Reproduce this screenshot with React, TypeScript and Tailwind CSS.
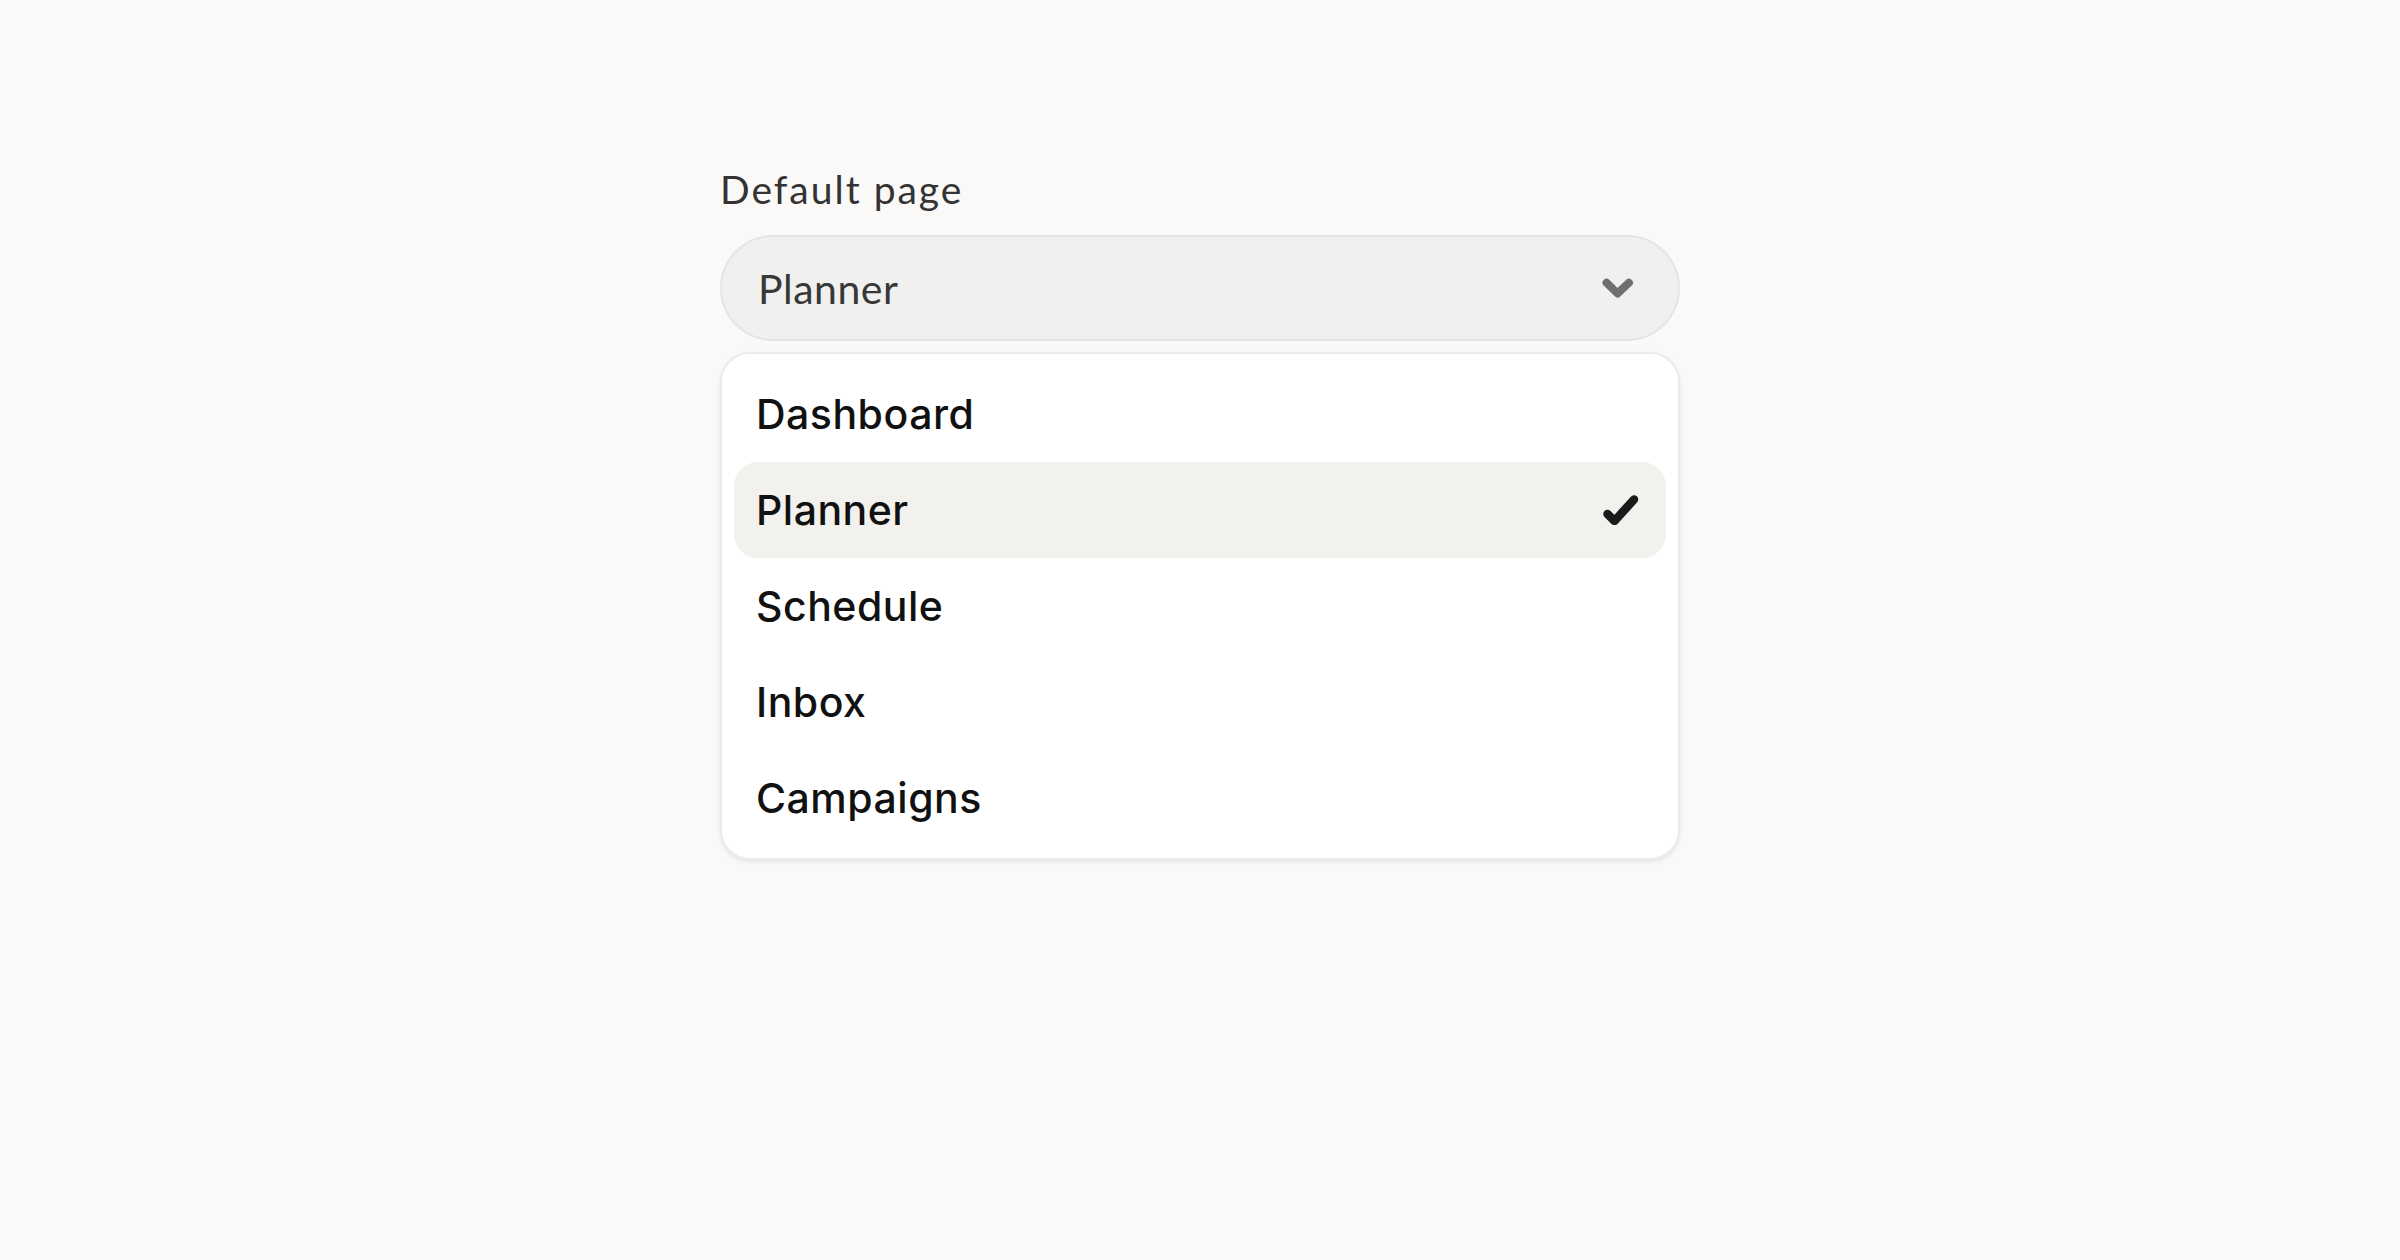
import { useState } from 'react';

const pages = ['Dashboard', 'Planner', 'Schedule', 'Inbox', 'Campaigns'];

function ChevronIcon() {
  return (
    <svg width="32" height="20" viewBox="0 0 32 20" fill="none" className="shrink-0">
      <path
        d="M4.5 4.7 L15.5 15.5 L27 4.7"
        stroke="#6f6f6f"
        strokeWidth="8"
        strokeLinecap="round"
        strokeLinejoin="round"
      />
    </svg>
  );
}

function CheckIcon() {
  return (
    <svg width="36" height="30" viewBox="0 0 36 30" fill="none" className="shrink-0">
      <path
        d="M4.5 19 L11.5 26 L31 4.5"
        stroke="#1a1a1a"
        strokeWidth="8.5"
        strokeLinecap="round"
        strokeLinejoin="round"
      />
    </svg>
  );
}

export default function App() {
  const [selected, setSelected] = useState('Planner');

  return (
    <div className="min-h-screen bg-[#faf9f7] pt-[170px]">
      <div className="mx-auto w-[960px]">
        <div className="font-['Lato',sans-serif] text-[39px] leading-none tracking-[2px] text-[#333333]">
          Default page
        </div>

        <button className="mt-[26px] flex h-[106px] w-full items-center justify-between rounded-full border-2 border-[#e5e5e3] bg-[#f0f0ef] pl-[36px] pr-[44px] text-left">
          <span className="font-['Lato',sans-serif] text-[41px] leading-none tracking-[0.5px] text-[#383838]">
            {selected}
          </span>
          <ChevronIcon />
        </button>

        <div className="mt-[11px] rounded-[30px] border-2 border-[#ebebe9] bg-white p-3 shadow-[0_2px_4px_rgba(0,0,0,0.09)]">
          {pages.map((page) => (
            <div
              key={page}
              onClick={() => setSelected(page)}
              className={`flex h-[96px] cursor-pointer items-center justify-between rounded-[24px] pl-[22px] pr-[27px] ${
                page === selected ? 'bg-[#f3f1ed]' : ''
              }`}
            >
              <span className="font-['Inter',sans-serif] text-[41px] font-medium leading-none tracking-[0.5px] text-[#111111]">
                {page}
              </span>
              {page === selected && <CheckIcon />}
            </div>
          ))}
        </div>
      </div>
    </div>
  );
}
